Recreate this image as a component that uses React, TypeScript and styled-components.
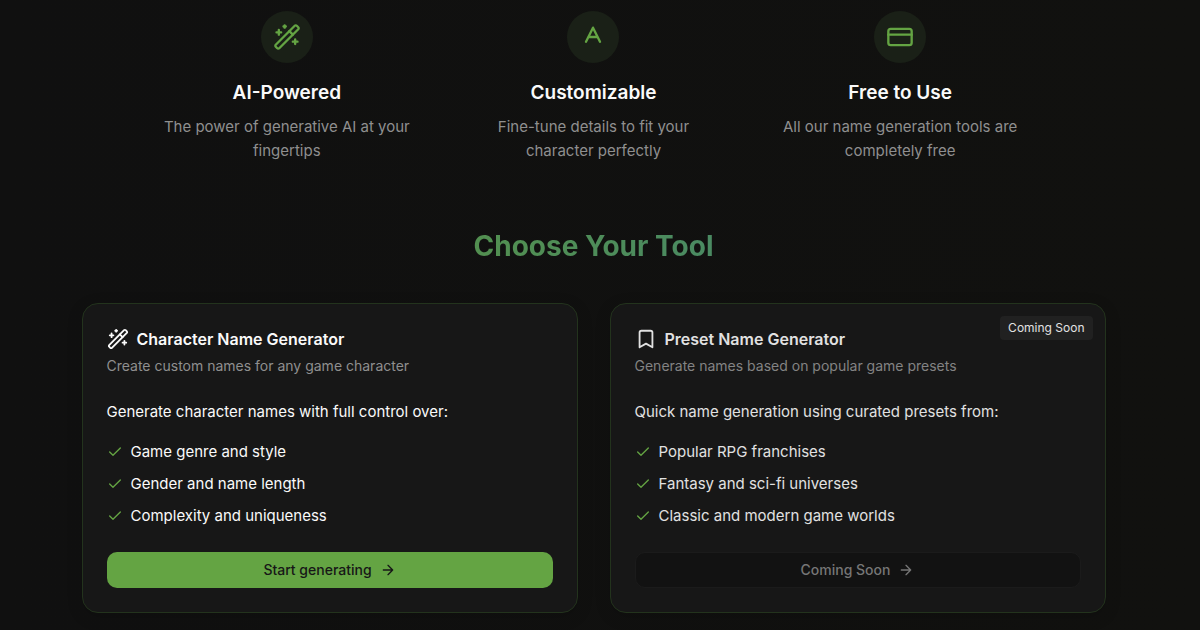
import React from "react";
import styled, { createGlobalStyle, css } from "styled-components";

const GlobalStyle = createGlobalStyle`
  * { box-sizing: border-box; margin: 0; padding: 0; }
  body {
    background: #111111;
    color: #fafafa;
    font-family: Inter, "Liberation Sans", sans-serif;
    font-size: 15px;
    line-height: 24px;
  }
`;

const Page = styled.main`
  min-height: 100vh;
  padding: 11px 29px 16px 16px;
  background: linear-gradient(to right, #101010, #11110f);
`;

const Features = styled.section`
  display: grid;
  grid-template-columns: repeat(3, 1fr);
  gap: 24px;
  max-width: 896px;
  margin: 0 auto 64px;
`;

const Feature = styled.article`
  display: flex;
  flex-direction: column;
  align-items: center;
  padding: 0 16px;
  text-align: center;
`;

const FeatureIcon = styled.div`
  display: flex;
  padding: 12px;
  margin-bottom: 16px;
  border-radius: 50%;
  background: #1a2017;
  color: #64a443;
`;

const FeatureTitle = styled.h3`
  margin-bottom: 8px;
  font-size: 19px;
  font-weight: 600;
  line-height: 28px;
`;

const FeatureText = styled.p`
  color: #8f8f8f;
`;

const Heading = styled.h2`
  width: fit-content;
  margin: 0 auto 38px;
  font-size: 28px;
  font-weight: 700;
  line-height: 38px;
  color: transparent;
  background: linear-gradient(to right, #528f50, #4a8a62);
  background-clip: text;
`;

const Tools = styled.section`
  display: grid;
  grid-template-columns: repeat(2, 1fr);
  gap: 32px;
  max-width: 1024px;
  margin: 0 auto;
`;

const Card = styled.article<{ $muted?: boolean }>`
  position: relative;
  display: flex;
  flex-direction: column;
  padding: 24px;
  border: 1px solid #23331d;
  border-radius: 16px;
  background: #171717;
  box-shadow: 0 4px 16px rgba(0, 0, 0, 0.15);
  color: ${(p) => (p.$muted ? "#e1e1e1" : "#fafafa")};
`;

const Badge = styled.span`
  position: absolute;
  top: 12px;
  right: 12px;
  padding: 4px 8px;
  border-radius: 4px;
  background: #212121;
  font-size: 12px;
  line-height: 16px;
`;

const CardTitle = styled.h3`
  display: flex;
  align-items: center;
  gap: 8px;
  margin-bottom: 6px;
  font-size: 16px;
  font-weight: 600;
  line-height: 22px;
`;

const CardSubtitle = styled.p<{ $muted?: boolean }>`
  margin-bottom: 24px;
  font-size: 14px;
  line-height: 20px;
  color: ${(p) => (p.$muted ? "#838383" : "#8f8f8f")};
`;

const List = styled.ul`
  display: flex;
  flex-direction: column;
  gap: 8px;
  margin: 16px 0 24px;
  list-style: none;
`;

const Item = styled.li`
  display: flex;
  align-items: center;
  gap: 8px;

  svg { color: #64a443; }
`;

const Action = styled.button`
  display: flex;
  align-items: center;
  justify-content: center;
  gap: 8px;
  height: 36px;
  border: 0;
  border-radius: 10px;
  background: #64a443;
  color: #171717;
  font: 500 14px/20px Inter, "Liberation Sans", sans-serif;
  cursor: pointer;

  ${(p) =>
    p.disabled &&
    css`
      border: 1px solid #1b1b1b;
      background: #121212;
      color: #767676;
      cursor: default;
    `}
`;

const Icon = ({ size, children }: { size: number; children: React.ReactNode }) => (
  <svg
    width={size}
    height={size}
    viewBox="0 0 24 24"
    fill="none"
    stroke="currentColor"
    strokeWidth="2"
    strokeLinecap="round"
    strokeLinejoin="round"
    aria-hidden="true"
  >
    {children}
  </svg>
);

const wand = (
  <>
    <path d="m21.64 3.64-1.28-1.28a1.21 1.21 0 0 0-1.72 0L2.36 18.64a1.21 1.21 0 0 0 0 1.72l1.28 1.28a1.2 1.2 0 0 0 1.72 0L21.64 5.36a1.2 1.2 0 0 0 0-1.72" />
    <path d="m14 7 3 3M5 6v4M19 14v4M10 2v2M7 8H3M21 16h-4M11 3H9" />
  </>
);
const letter = <path d="m6 16 6-12 6 12M8 12h8" />;
const creditCard = (
  <>
    <rect x="2" y="5" width="20" height="14" rx="2" />
    <path d="M2 10h20" />
  </>
);
const bookmark = <path d="m19 21-7-4-7 4V5a2 2 0 0 1 2-2h10a2 2 0 0 1 2 2v16z" />;
const check = <path d="M20 6 9 17l-5-5" />;
const arrow = <path d="M5 12h14M12 5l7 7-7 7" />;

const features = [
  { icon: wand, title: "AI-Powered", text: "The power of generative AI at your fingertips" },
  { icon: letter, title: "Customizable", text: "Fine-tune details to fit your character perfectly" },
  { icon: creditCard, title: "Free to Use", text: "All our name generation tools are completely free" },
];

const tools = [
  {
    icon: wand,
    title: "Character Name Generator",
    subtitle: "Create custom names for any game character",
    intro: "Generate character names with full control over:",
    items: ["Game genre and style", "Gender and name length", "Complexity and uniqueness"],
    action: "Start generating",
    soon: false,
  },
  {
    icon: bookmark,
    title: "Preset Name Generator",
    subtitle: "Generate names based on popular game presets",
    intro: "Quick name generation using curated presets from:",
    items: ["Popular RPG franchises", "Fantasy and sci-fi universes", "Classic and modern game worlds"],
    action: "Coming Soon",
    soon: true,
  },
];

export default function App() {
  return (
    <>
      <GlobalStyle />
      <Page>
        <Features>
          {features.map((f) => (
            <Feature key={f.title}>
              <FeatureIcon>
                <Icon size={28}>{f.icon}</Icon>
              </FeatureIcon>
              <FeatureTitle>{f.title}</FeatureTitle>
              <FeatureText>{f.text}</FeatureText>
            </Feature>
          ))}
        </Features>
        <Heading>Choose Your Tool</Heading>
        <Tools>
          {tools.map((t) => (
            <Card key={t.title} $muted={t.soon}>
              {t.soon && <Badge>Coming Soon</Badge>}
              <CardTitle>
                <Icon size={22}>{t.icon}</Icon>
                {t.title}
              </CardTitle>
              <CardSubtitle $muted={t.soon}>{t.subtitle}</CardSubtitle>
              <p>{t.intro}</p>
              <List>
                {t.items.map((item) => (
                  <Item key={item}>
                    <Icon size={16}>{check}</Icon>
                    {item}
                  </Item>
                ))}
              </List>
              <Action type="button" disabled={t.soon}>
                {t.action}
                <Icon size={16}>{arrow}</Icon>
              </Action>
            </Card>
          ))}
        </Tools>
      </Page>
    </>
  );
}
